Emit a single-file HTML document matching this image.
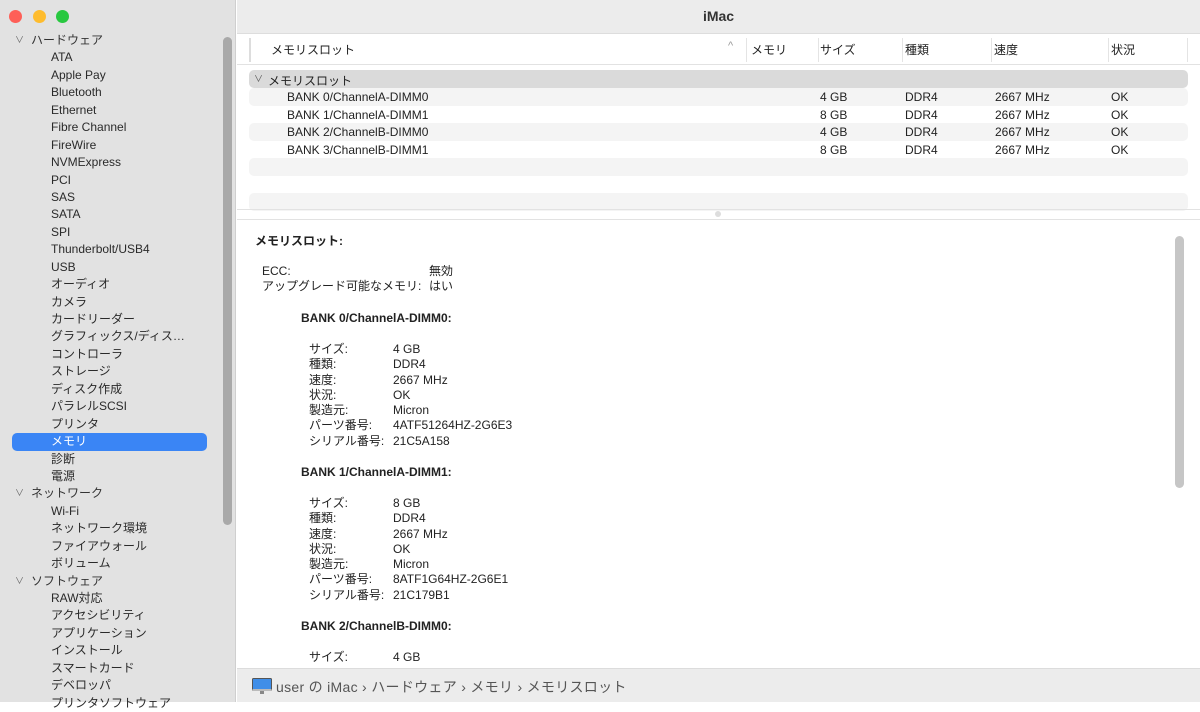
<!DOCTYPE html>
<html><head><meta charset="utf-8"><style>
*{margin:0;padding:0;box-sizing:border-box}
body{width:1200px;height:702px;overflow:hidden;background:#fff;font-family:"Liberation Sans","Noto Sans CJK JP",sans-serif;font-size:12px;color:#222;position:relative}
.side{position:absolute;left:0;top:0;width:236px;height:702px;background:#e2e2e2;border-right:1px solid #cfcfcf}
.dot{position:absolute;top:10px;width:13px;height:13px;border-radius:50%}
.sl{position:absolute;left:0;top:32px;width:236px}
.sl div{height:17.45px;line-height:17.45px;white-space:nowrap;color:#2a2a2a}
.sl .g{padding-left:31px;color:#333}
.sl .c{padding-left:51px}
.sl .sel{background:#3a85f5;color:#fff;margin:0 29px 0 12px;padding-left:39px;border-radius:5px}
.chev{position:absolute;left:15px;font-size:9px;color:#666}
.ssb{position:absolute;left:223px;top:37px;width:9px;height:488px;background:#a9a9a9;border-radius:5px}
.title{position:absolute;left:237px;top:0;width:963px;height:33px;background:#ececec;text-align:center;line-height:32px;font-weight:bold;font-size:14px;color:#333}
.abs{position:absolute;white-space:nowrap}
.row{position:absolute;left:249px;width:939px;height:17.5px;border-radius:5px}
.detail div{position:absolute;white-space:nowrap;line-height:15px}
.status{position:absolute;left:237px;top:668px;width:963px;height:34px;background:#ececec;border-top:1px solid #dcdcdc}
</style></head><body>
<div class="side">
<div class="dot" style="left:9px;background:#fe5f57"></div>
<div class="dot" style="left:33px;background:#febc2e"></div>
<div class="dot" style="left:56px;background:#28c840"></div>
<div class="sl">
<div class="g"><span class="chev">∨</span>ハードウェア</div>
<div class="c">ATA</div><div class="c">Apple Pay</div><div class="c">Bluetooth</div><div class="c">Ethernet</div><div class="c">Fibre Channel</div><div class="c">FireWire</div><div class="c">NVMExpress</div><div class="c">PCI</div><div class="c">SAS</div><div class="c">SATA</div><div class="c">SPI</div><div class="c">Thunderbolt/USB4</div><div class="c">USB</div><div class="c">オーディオ</div><div class="c">カメラ</div><div class="c">カードリーダー</div><div class="c">グラフィックス/ディス…</div><div class="c">コントローラ</div><div class="c">ストレージ</div><div class="c">ディスク作成</div><div class="c">パラレルSCSI</div><div class="c">プリンタ</div>
<div class="sel">メモリ</div>
<div class="c">診断</div><div class="c">電源</div>
<div class="g"><span class="chev">∨</span>ネットワーク</div>
<div class="c">Wi-Fi</div><div class="c">ネットワーク環境</div><div class="c">ファイアウォール</div><div class="c">ボリューム</div>
<div class="g"><span class="chev">∨</span>ソフトウェア</div>
<div class="c">RAW対応</div><div class="c">アクセシビリティ</div><div class="c">アプリケーション</div><div class="c">インストール</div><div class="c">スマートカード</div><div class="c">デベロッパ</div><div class="c">プリンタソフトウェア</div>
</div>
<div class="ssb"></div>
</div>
<div class="title">iMac</div>
<div class="abs" style="left:237px;top:33px;width:963px;height:1px;background:#ddd"></div>
<div class="abs" style="left:249px;top:38px;width:2px;height:24px;background:#ddd"></div>
<div class="abs" style="left:237px;top:64px;width:963px;height:1px;background:#e2e2e2"></div>
<div class="abs" style="left:271px;top:41px">メモリスロット</div>
<div class="abs" style="left:728px;top:40px;color:#999;font-size:11px">^</div>
<div class="abs" style="left:746px;top:38px;width:1px;height:24px;background:#e4e4e4"></div>
<div class="abs" style="left:751px;top:41px">メモリ</div>
<div class="abs" style="left:818px;top:38px;width:1px;height:24px;background:#e4e4e4"></div>
<div class="abs" style="left:820px;top:41px">サイズ</div>
<div class="abs" style="left:902px;top:38px;width:1px;height:24px;background:#e4e4e4"></div>
<div class="abs" style="left:905px;top:41px">種類</div>
<div class="abs" style="left:991px;top:38px;width:1px;height:24px;background:#e4e4e4"></div>
<div class="abs" style="left:994px;top:41px">速度</div>
<div class="abs" style="left:1108px;top:38px;width:1px;height:24px;background:#e4e4e4"></div>
<div class="abs" style="left:1111px;top:41px">状況</div>
<div class="abs" style="left:1187px;top:38px;width:1px;height:24px;background:#e4e4e4"></div>
<div class="row" style="top:70px;background:#dadada"></div>
<div class="row" style="top:88px;background:#f4f4f4"></div>
<div class="row" style="top:123px;background:#f4f4f4"></div>
<div class="row" style="top:158px;background:#f4f4f4"></div>
<div class="row" style="top:193px;background:#f4f4f4"></div>
<div class="abs" style="left:254px;top:72px;font-size:9px;color:#555">∨</div>
<div class="abs" style="left:268px;top:72px">メモリスロット</div>
<div class="abs" style="left:287px;top:89px;line-height:17.5px">BANK 0/ChannelA-DIMM0<br>BANK 1/ChannelA-DIMM1<br>BANK 2/ChannelB-DIMM0<br>BANK 3/ChannelB-DIMM1</div>
<div class="abs" style="left:820px;top:89px;line-height:17.5px">4 GB<br>8 GB<br>4 GB<br>8 GB</div>
<div class="abs" style="left:905px;top:89px;line-height:17.5px">DDR4<br>DDR4<br>DDR4<br>DDR4</div>
<div class="abs" style="left:995px;top:89px;line-height:17.5px">2667 MHz<br>2667 MHz<br>2667 MHz<br>2667 MHz</div>
<div class="abs" style="left:1111px;top:89px;line-height:17.5px">OK<br>OK<br>OK<br>OK</div>
<div class="abs" style="left:237px;top:209px;width:963px;height:1px;background:#e2e2e2"></div>
<div class="abs" style="left:237px;top:219px;width:963px;height:1px;background:#e2e2e2"></div>
<div class="abs" style="left:715px;top:211px;width:6px;height:6px;border-radius:50%;background:#ddd"></div>
<div class="abs" style="left:1175px;top:236px;width:9px;height:252px;background:#c6c6c6;border-radius:5px"></div>
<div class="detail">
<div style="left:255px;top:234px;font-weight:bold">メモリスロット:</div>
<div style="left:262px;top:264px">ECC:</div><div style="left:429px;top:264px">無効</div>
<div style="left:262px;top:279px">アップグレード可能なメモリ:</div><div style="left:429px;top:279px">はい</div>
<div style="left:301px;top:311px;font-weight:bold">BANK 0/ChannelA-DIMM0:</div>
<div style="left:309px;top:342px;line-height:15.3px">サイズ:<br>種類:<br>速度:<br>状況:<br>製造元:<br>パーツ番号:<br>シリアル番号:</div>
<div style="left:393px;top:342px;line-height:15.3px">4 GB<br>DDR4<br>2667 MHz<br>OK<br>Micron<br>4ATF51264HZ-2G6E3<br>21C5A158</div>
<div style="left:301px;top:465px;font-weight:bold">BANK 1/ChannelA-DIMM1:</div>
<div style="left:309px;top:496px;line-height:15.3px">サイズ:<br>種類:<br>速度:<br>状況:<br>製造元:<br>パーツ番号:<br>シリアル番号:</div>
<div style="left:393px;top:496px;line-height:15.3px">8 GB<br>DDR4<br>2667 MHz<br>OK<br>Micron<br>8ATF1G64HZ-2G6E1<br>21C179B1</div>
<div style="left:301px;top:619px;font-weight:bold">BANK 2/ChannelB-DIMM0:</div>
<div style="left:309px;top:650px">サイズ:</div><div style="left:393px;top:650px">4 GB</div>
</div>
<div class="status">
<svg style="position:absolute;left:15px;top:9px" width="20" height="17" viewBox="0 0 20 17"><rect x="0.5" y="0.5" width="19" height="12" rx="1" fill="#3f8ee8" stroke="#555"/><rect x="0.5" y="11" width="19" height="2" fill="#bbb"/><rect x="8" y="13" width="4" height="3" fill="#888"/></svg>
<div class="abs" style="left:39px;top:8px;font-size:14px;color:#555;letter-spacing:0.3px">user の iMac › ハードウェア › メモリ › メモリスロット</div>
</div>
</body></html>
